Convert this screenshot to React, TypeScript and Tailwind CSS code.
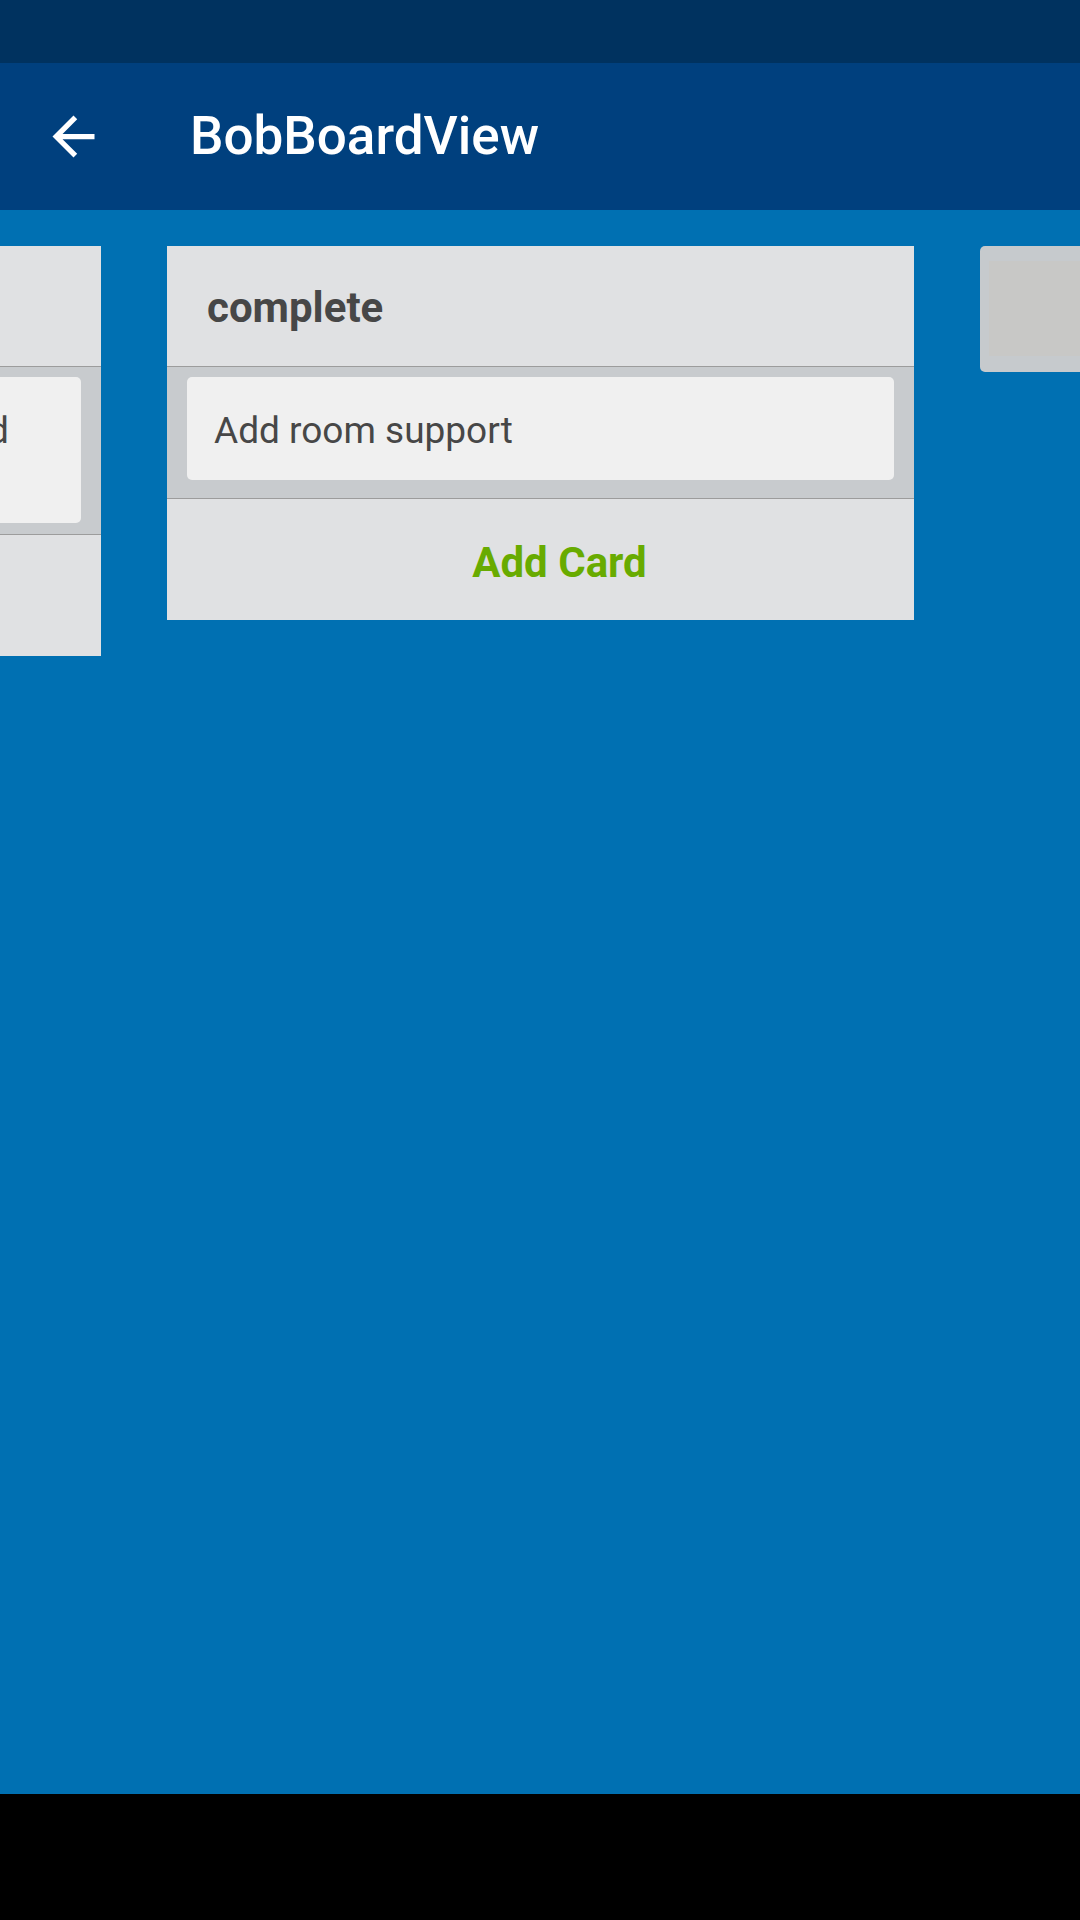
import { ReactNode } from 'react';

const font = { fontFamily: 'Roboto, "Noto Sans", sans-serif' };

interface ColumnProps {
  title?: string;
  children: ReactNode;
  listPad: string;
}

function BoardColumn({ title, children, listPad }: ColumnProps) {
  return (
    <div className="w-[747px] shrink-0 bg-[#e0e1e3] flex flex-col">
      {/* Column header */}
      <div className="h-[121px] flex items-center pl-[40px] border-b border-[#9c9c9c]">
        <span className="text-[42px] font-bold text-[#474747] leading-none pt-[4px]">{title}</span>
      </div>

      {/* Card list */}
      <div className={`bg-[#c8cbce] px-[20px] pt-[10px] ${listPad} border-b border-[#9c9c9c]`}>
        {children}
      </div>

      {/* Footer */}
      <div className="h-[121px] flex items-center justify-center pl-[38px]">
        <span className="text-[42px] font-bold text-[#68ab00] leading-none pt-[7px]">Add Card</span>
      </div>
    </div>
  );
}

function Card({ children }: { children: ReactNode }) {
  return (
    <div className="bg-[#f0f0f0] rounded-[5px] px-[27px] pt-[32px] pb-[28px] text-[37px] leading-[43px] text-[#474747]">
      {children}
    </div>
  );
}

export default function App() {
  return (
    <div className="w-[1080px] h-[1920px] flex flex-col overflow-hidden" style={font}>
      {/* Status bar */}
      <div className="h-[63px] bg-[#00325f] shrink-0" />

      {/* App bar */}
      <div className="h-[147px] bg-[#00407e] shrink-0 flex items-center">
        <div className="w-[63px] h-[63px] ml-[42px]">
          <svg viewBox="0 0 24 24" width="63" height="63" fill="#ffffff">
            <path d="M20 11H7.83l5.59-5.59L12 4l-8 8 8 8 1.41-1.41L7.83 13H20v-2z" />
          </svg>
        </div>
        <span className="ml-[85px] text-[53px] font-medium text-white leading-none">BobBoardView</span>
      </div>

      {/* Board, scrolled sideways */}
      <div className="flex-1 bg-[#0070b2] pt-[36px] overflow-hidden">
        <div className="flex items-start gap-[66px] ml-[-646px]">
          <BoardColumn listPad="pb-[11px]">
            <Card>
              <div className="whitespace-nowrap text-right mr-[45px]">Implement card dragging on board</div>
              <div>view</div>
            </Card>
          </BoardColumn>

          <BoardColumn title="complete" listPad="pb-[18px]">
            <Card>Add room support</Card>
          </BoardColumn>

          {/* Next column, only partly visible */}
          <div className="w-[747px] shrink-0 h-[126px] bg-[#c6cacd] rounded-[5px] pl-[9px] pt-[15px] pb-[16px]">
            <div className="h-full bg-[#c8c8c6]" />
          </div>
        </div>
      </div>

      {/* Navigation bar */}
      <div className="h-[126px] bg-black shrink-0" />
    </div>
  );
}
